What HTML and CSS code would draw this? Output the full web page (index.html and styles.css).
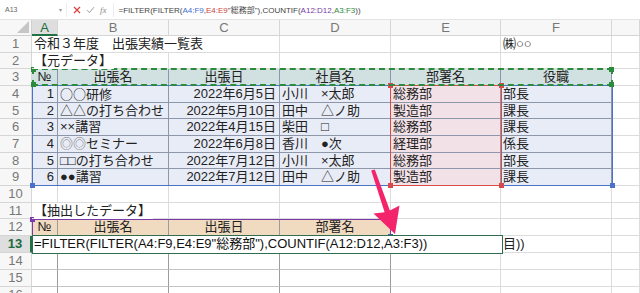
FILE: index.html
```html
<!DOCTYPE html>
<html lang="ja">

<head>
    <meta charset="utf-8">
    <meta name="viewport" content="width=device-width, initial-scale=1.0">
    <title>出張実績一覧表</title>
    <link rel="stylesheet" href="styles.css">
</head>

<body>
    <!-- 数式バー -->
    <div class="formula_bar">
        <div class="name_box">A13<span class="caret">▾</span></div>
        <div class="bar_icons">
            <svg width="8" height="8" viewBox="0 0 8 8"><path d="M1 1L7 7M7 1L1 7" stroke="#d9443f" stroke-width="1.3" fill="none"/></svg>
            <svg width="9" height="8" viewBox="0 0 9 8"><path d="M1 4.2L3.4 6.6L8 1.2" stroke="#9a9a9a" stroke-width="1" fill="none"/></svg>
            <span class="fx">fx</span>
        </div>
        <div class="formula">=FILTER(FILTER(<span class="ref_blue">A4:F9</span>,<span class="ref_red">E4:E9</span>"総務部"),COUNTIF(<span class="ref_purple">A12:D12</span>,<span class="ref_green">A3:F3</span>))</div>
    </div>

    <div class="sheet">
        <div class="grid">
            <!-- 列見出し -->
            <div class="corner"><i></i></div>
            <div class="ch sel">A</div>
            <div class="ch">B</div>
            <div class="ch">C</div>
            <div class="ch">D</div>
            <div class="ch">E</div>
            <div class="ch">F</div>
            <div class="ch"></div>

            <!-- 1 -->
            <div class="rh">1</div>
            <div class="over"><span>令和３年度　出張実績一覧表</span></div>
            <div></div><div></div><div></div><div></div>
            <div>㈱○○</div>
            <div></div>

            <!-- 2 -->
            <div class="rh">2</div>
            <div class="over"><span>【元データ】</span></div>
            <div></div><div></div><div></div><div></div><div></div><div></div>

            <!-- 3 -->
            <div class="rh">3</div>
            <div class="t th">№</div>
            <div class="t th">出張名</div>
            <div class="t th">出張日</div>
            <div class="t th">社員名</div>
            <div class="t th">部署名</div>
            <div class="t th">役職</div>
            <div></div>

            <!-- 4 -->
            <div class="rh">4</div>
            <div class="t td num">1</div>
            <div class="t td"><span class="wide">○○</span>研修</div>
            <div class="t td num">2022年6月5日</div>
            <div class="t td">小川　×太郎</div>
            <div class="t td pk">総務部</div>
            <div class="t td">部長</div>
            <div></div>

            <!-- 5 -->
            <div class="rh">5</div>
            <div class="t td num">2</div>
            <div class="t td">△△の打ち合わせ</div>
            <div class="t td num">2022年5月10日</div>
            <div class="t td">田中　△ノ助</div>
            <div class="t td pk">製造部</div>
            <div class="t td">課長</div>
            <div></div>

            <!-- 6 -->
            <div class="rh">6</div>
            <div class="t td num">3</div>
            <div class="t td">××講習</div>
            <div class="t td num">2022年4月15日</div>
            <div class="t td">柴田　□</div>
            <div class="t td pk">総務部</div>
            <div class="t td">課長</div>
            <div></div>

            <!-- 7 -->
            <div class="rh">7</div>
            <div class="t td num">4</div>
            <div class="t td"><span class="dbl">◎◎</span>セミナー</div>
            <div class="t td num">2022年6月8日</div>
            <div class="t td">香川　●次</div>
            <div class="t td pk">経理部</div>
            <div class="t td">係長</div>
            <div></div>

            <!-- 8 -->
            <div class="rh">8</div>
            <div class="t td num">5</div>
            <div class="t td">□□の打ち合わせ</div>
            <div class="t td num">2022年7月12日</div>
            <div class="t td">小川　×太郎</div>
            <div class="t td pk">総務部</div>
            <div class="t td">部長</div>
            <div></div>

            <!-- 9 -->
            <div class="rh">9</div>
            <div class="t td num">6</div>
            <div class="t td">●●講習</div>
            <div class="t td num">2022年7月12日</div>
            <div class="t td">田中　△ノ助</div>
            <div class="t td pk">製造部</div>
            <div class="t td">課長</div>
            <div></div>

            <!-- 10 -->
            <div class="rh">10</div>
            <div></div><div></div><div></div><div></div><div></div><div></div><div></div>

            <!-- 11 -->
            <div class="rh">11</div>
            <div class="over"><span>【抽出したデータ】</span></div>
            <div></div><div></div><div></div><div></div><div></div><div></div>

            <!-- 12 -->
            <div class="rh">12</div>
            <div class="ex tan">№</div>
            <div class="ex tan">出張名</div>
            <div class="ex tan">出張日</div>
            <div class="ex tan">部署名</div>
            <div></div><div></div><div></div>

            <!-- 13 -->
            <div class="rh sel">13</div>
            <div class="ex"></div><div class="ex"></div><div class="ex"></div><div class="ex"></div>
            <div></div>
            <div>目))</div>
            <div></div>

            <!-- 14 -->
            <div class="rh">14</div>
            <div class="ex"></div><div class="ex"></div><div class="ex"></div><div class="ex"></div>
            <div></div><div></div><div></div>

            <!-- 15 -->
            <div class="rh">15</div>
            <div class="ex"></div><div class="ex"></div><div class="ex"></div><div class="ex"></div>
            <div></div><div></div><div></div>

            <!-- 16 -->
            <div class="rh">16</div>
            <div class="ex"></div><div class="ex"></div><div class="ex"></div><div class="ex"></div>
            <div></div><div></div><div></div>
        </div>

        <!-- 参照範囲の枠 -->
        <div class="rng rng_blue"><b class="bl"></b><b class="br"></b></div>
        <div class="rng rng_red"><b class="tl"></b><b class="tr"></b><b class="bl"></b><b class="br"></b></div>
        <div class="rng rng_green"><b class="tl"></b><b class="tr"></b><b class="bl"></b><b class="br"></b></div>
        <div class="rng rng_purple"><b class="tl"></b><b class="br"></b></div>

        <div class="edit_box">=FILTER(FILTER(A4:F9,E4:E9"総務部"),COUNTIF(A12:D12,A3:F3))</div>

        <svg class="arrow" width="640" height="273" viewBox="0 0 640 273">
            <polygon points="374.8,149.4 389.9,190.4 399.5,185.4 395,214 373.5,193.5 384.6,192.2 371.2,150.6" fill="#f4246c"/>
        </svg>
    </div>
</body>

</html>
```

FILE: styles.css
```css
* {
    margin: 0;
    padding: 0;
    box-sizing: border-box;
}

html,
body {
    width: 100%;
    height: 100%;
    overflow: hidden;
    background: #fff;
    font-family: "Liberation Sans", "Noto Sans CJK JP", sans-serif;
    color: #222;
}

/* 数式バー */
.formula_bar {
    height: 20px;
    display: flex;
    align-items: center;
    border-bottom: 1px solid #e3e3e3;
}

.name_box {
    width: 66px;
    height: 15px;
    display: flex;
    align-items: center;
    justify-content: space-between;
    padding: 0 4px 0 5px;
    font-size: 7px;
    color: #666;
}

.name_box .caret {
    font-size: 6px;
    color: #999;
}

.bar_icons {
    display: flex;
    align-items: center;
    gap: 5px;
    height: 14px;
    padding: 0 6px 0 6px;
    border-left: 1px solid #ececec;
    border-right: 1px solid #ececec;
}

.fx {
    font-family: "Liberation Serif", serif;
    font-style: italic;
    font-size: 9px;
    color: #888;
}

.formula {
    padding-left: 5px;
    font-size: 8px;
    color: #444;
    white-space: nowrap;
}

.ref_blue {
    color: #3f6fd0;
}

.ref_red {
    color: #c9463f;
}

.ref_purple {
    color: #7a3aa8;
}

.ref_green {
    color: #2f8a45;
}

/* シート */
.sheet {
    position: relative;
}

.grid {
    display: grid;
    grid-template-columns: 32px 26px 111px 111px 111px 110px 111px 1fr;
    grid-template-rows: 16px 17px 16px 17px 17px 16px 17px 17px 16px 17px 17px 16px 17px 17px 17px 17px 17px;
    font-size: 13px;
}

.grid>div {
    border-right: 1px solid #dcdcdc;
    border-bottom: 1px solid #dcdcdc;
    line-height: 16px;
    padding: 0 2px;
    white-space: nowrap;
}

.grid>.corner {
    display: flex;
    align-items: flex-end;
    justify-content: flex-end;
    padding: 0 2px 2px 0;
    background: #f7f7f7;
    border-color: #d0d0d0;
}

.corner i {
    width: 0;
    height: 0;
    border-left: 12px solid transparent;
    border-bottom: 12px solid #c6c6c6;
}

.grid>.ch {
    text-align: center;
    color: #777;
    background: #f7f7f7;
    border-color: #d6d6d6;
}

.grid>.rh {
    text-align: center;
    color: #777;
    background: #f7f7f7;
    border-color: #d6d6d6;
    overflow: hidden;
}

.grid>.ch.sel {
    background: #dedede;
    color: #1d6b40;
    border-bottom: 2px solid #217346;
}

.grid>.rh.sel {
    background: #dedede;
    color: #1d6b40;
    font-weight: bold;
    border-right: 2px solid #217346;
}

/* はみ出す文字 */
.grid>.over {
    position: relative;
    z-index: 1;
}

.over span {
    display: inline-block;
    height: 16px;
    padding-right: 2px;
    background: #fff;
}

/* 元データの表 */
.grid>.t {
    border-color: #8d97a9;
}

.grid>.th {
    background: #d1e0e0;
    text-align: center;
}

.grid>.td {
    background: #e8ecf6;
}

.grid>.pk {
    background: #f2e1e7;
}

.grid>.num {
    text-align: right;
    padding-right: 3px;
}

.wide {
    font-family: "Noto Sans CJK JP", sans-serif;
    line-height: 16px;
}

.dbl {
    color: #777;
}

/* 抽出先の表 */
.grid>.ex {
    border-right-color: #9c9c9c;
    border-bottom-color: #c4c4c4;
}

.grid>.tan {
    background: #f0dbc0;
    text-align: center;
    border-bottom-color: #9c9c9c;
}

/* 参照範囲 */
.rng {
    position: absolute;
    pointer-events: none;
}

.rng b {
    position: absolute;
    width: 5px;
    height: 5px;
    background: currentColor;
}

.rng .tl {
    left: -3px;
    top: -3px;
}

.rng .tr {
    right: -3px;
    top: -3px;
}

.rng .bl {
    left: -3px;
    bottom: -3px;
}

.rng .br {
    right: -3px;
    bottom: -3px;
}

.rng_blue {
    left: 32px;
    top: 65px;
    width: 581px;
    height: 101px;
    border: 1px solid #4a72c8;
    color: #4a72c8;
}

.rng_red {
    left: 390px;
    top: 65px;
    width: 112px;
    height: 101px;
    border: 1px solid #d64a4a;
    color: #d64a4a;
}

.rng_green {
    left: 32px;
    top: 48px;
    width: 581px;
    height: 18px;
    border: 2px dashed #2c8a3c;
    color: #2c8a3c;
}

.rng_purple {
    left: 32px;
    top: 199px;
    width: 359px;
    height: 18px;
    border: 1px solid #7a3aa8;
    color: #7a3aa8;
}

.rng_purple .br {
    color: #3d5a9a;
}

.edit_box {
    position: absolute;
    left: 32px;
    top: 215px;
    width: 471px;
    height: 19px;
    border: 1.5px solid #2e6e4f;
    background: #fff;
    font-size: 13px;
    line-height: 16px;
    padding-left: 1px;
    white-space: nowrap;
    color: #111;
}

.arrow {
    position: absolute;
    left: 0;
    top: 0;
    pointer-events: none;
}
```
